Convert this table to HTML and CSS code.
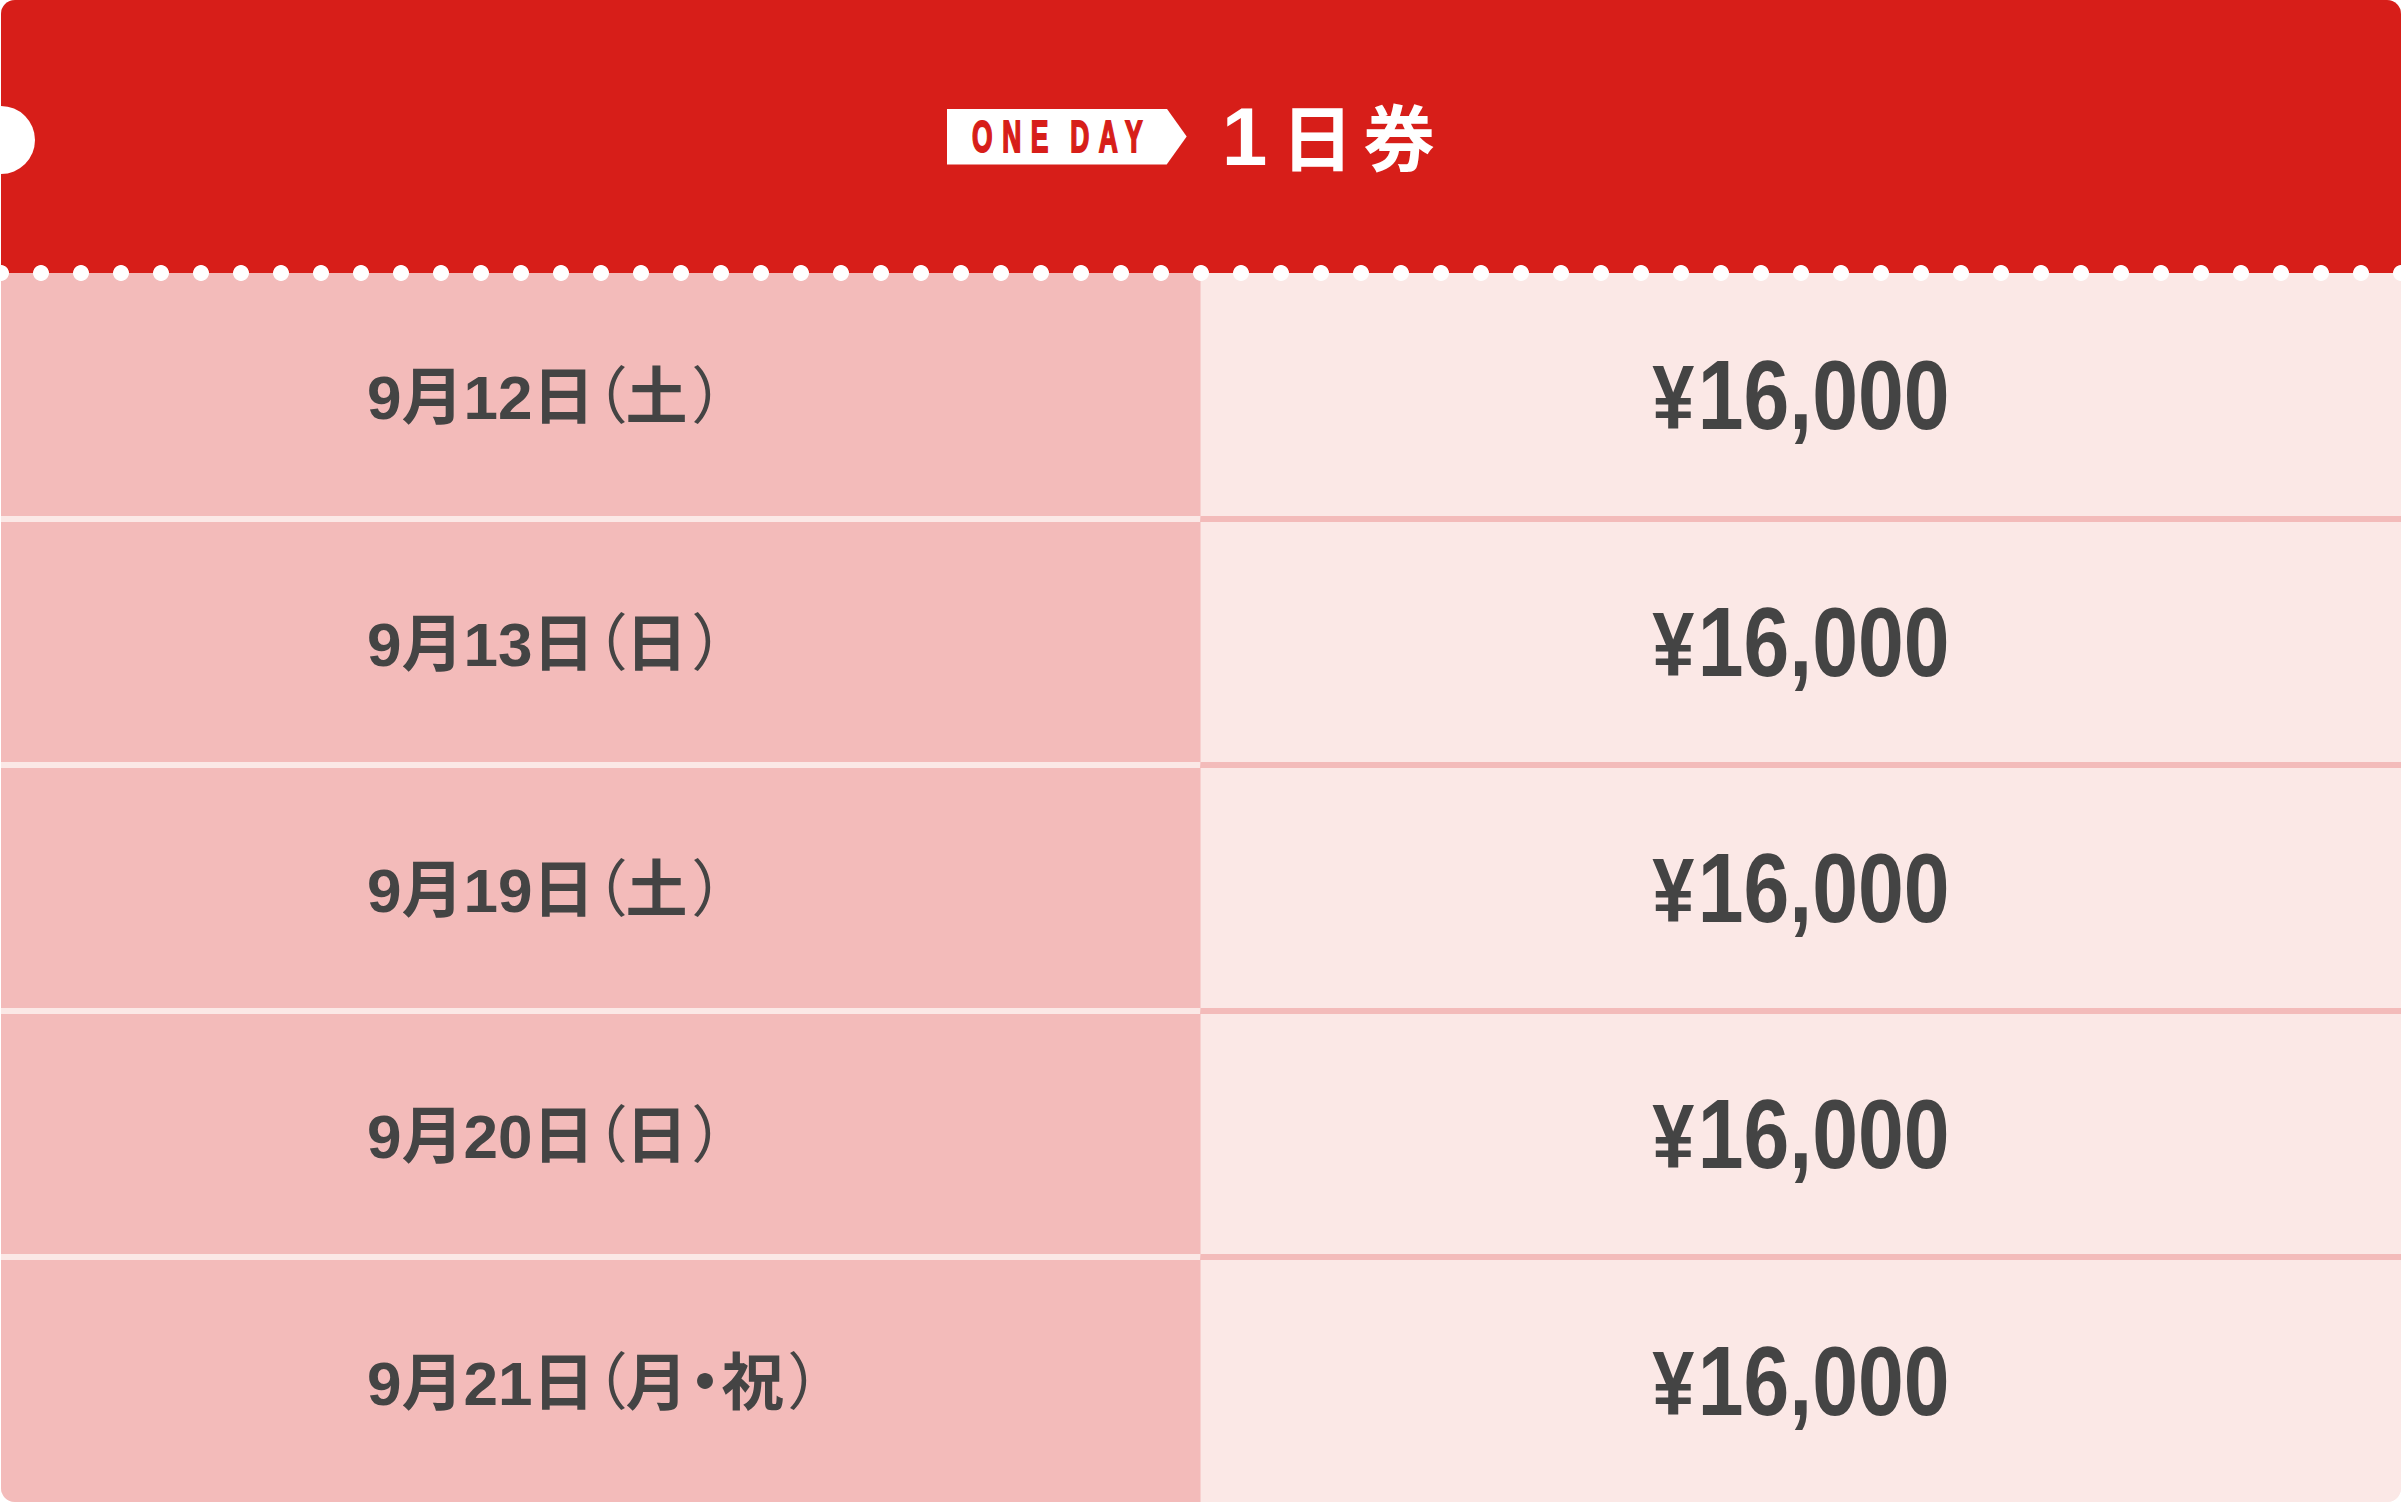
FILE: index.html
```html
<!DOCTYPE html>
<html lang="ja">
<head>
<meta charset="utf-8">
<title>1日券</title>
<link rel="stylesheet" href="styles.css">
</head>
<body>
<div class="ticket">
  <div class="head">
    <div class="tag"><span class="tag-text">ONE DAY</span></div>
    <div class="title"><span class="one">1</span><span class="kanji">日券</span></div>
  </div>
  <div class="rows">
    <div class="row">
      <div class="date"><span class="date-text">9月12日<span class="paren">（</span>土<span class="paren close">）</span></span></div>
      <div class="price"><span class="price-text"><span class="yen">¥</span>16,000</span></div>
    </div>
    <div class="row">
      <div class="date"><span class="date-text">9月13日<span class="paren">（</span>日<span class="paren close">）</span></span></div>
      <div class="price"><span class="price-text"><span class="yen">¥</span>16,000</span></div>
    </div>
    <div class="row">
      <div class="date"><span class="date-text">9月19日<span class="paren">（</span>土<span class="paren close">）</span></span></div>
      <div class="price"><span class="price-text"><span class="yen">¥</span>16,000</span></div>
    </div>
    <div class="row">
      <div class="date"><span class="date-text">9月20日<span class="paren">（</span>日<span class="paren close">）</span></span></div>
      <div class="price"><span class="price-text"><span class="yen">¥</span>16,000</span></div>
    </div>
    <div class="row">
      <div class="date"><span class="date-text">9月21日<span class="paren">（</span>月<span class="mid">・</span>祝<span class="paren close">）</span></span></div>
      <div class="price"><span class="price-text"><span class="yen">¥</span>16,000</span></div>
    </div>
  </div>
</div>
</body>
</html>
```
FILE: styles.css
```css
* {
  box-sizing: border-box;
  margin: 0;
  padding: 0;
}

html,
body {
  background: #ffffff;
}

body {
  width: 2401px;
  height: 1503px;
  overflow: hidden;
  font-family: "Liberation Sans", "Noto Sans CJK JP", sans-serif;
}

.ticket {
  margin-left: 1px;
  width: 2400px;
  height: 1502px;
  border-radius: 14px;
  overflow: hidden;
  display: grid;
  grid-template-rows: 273px 1fr;
  background: #fbe8e6;
}

.head {
  position: relative;
  z-index: 1;
  background: #d71e19;
  display: flex;
  align-items: center;
  justify-content: center;
  padding-right: 10px;
}

/* punched notch on the left edge */
.head::before {
  content: "";
  position: absolute;
  left: -34px;
  top: 106px;
  width: 68px;
  height: 68px;
  border-radius: 50%;
  background: #ffffff;
}

/* perforation dots along the bottom edge */
.head::after {
  content: "";
  position: absolute;
  left: -20px;
  right: -20px;
  bottom: -8px;
  height: 16px;
  background-image: radial-gradient(circle at 20px 8px, #ffffff 7.5px, rgba(255, 255, 255, 0) 8.3px);
  background-size: 40px 16px;
  background-repeat: repeat-x;
}

.tag {
  width: 240px;
  height: 56px;
  flex: none;
  background: #ffffff;
  clip-path: polygon(0 0, 220px 0, 100% 50%, 220px 100%, 0 100%);
  display: flex;
  align-items: center;
  padding-left: 25px;
  margin-right: 35px;
  overflow: hidden;
}

.tag-text {
  display: inline-block;
  color: #d71e19;
  font-family: "Liberation Sans", sans-serif;
  font-weight: 700;
  font-size: 44px;
  line-height: 1;
  letter-spacing: 16px;
  word-spacing: -8px;
  white-space: nowrap;
  -webkit-text-stroke: 2px #d71e19;
  transform: scaleX(0.6);
  transform-origin: left center;
}

.title {
  display: flex;
  align-items: baseline;
  color: #ffffff;
  font-weight: 700;
  line-height: 1;
  white-space: nowrap;
}

.title .one {
  font-family: "Liberation Sans", sans-serif;
  font-size: 82px;
  margin-right: 14px;
}

.title .kanji {
  font-family: "Noto Sans CJK JP", sans-serif;
  font-size: 72px;
  letter-spacing: 10px;
}

.rows {
  display: grid;
  grid-template-rows: 249px 246px 246px 246px 1fr;
}

.row {
  display: grid;
  grid-template-columns: 1199px 1fr;
}

.date {
  background: #f3bbba;
  border-bottom: 6px solid #fbe8e6;
  display: flex;
  align-items: center;
  padding-left: 366px;
  color: #444444;
}

.date-text {
  font-family: "Liberation Sans", "Noto Sans CJK JP", sans-serif;
  font-size: 62px;
  font-weight: 700;
  line-height: 1;
  white-space: nowrap;
}

.paren {
  font-family: "Noto Sans CJK JP", sans-serif;
  font-weight: 400;
  font-feature-settings: "palt";
}

.paren.close {
  margin-left: 6px;
}

.mid {
  font-family: "Noto Sans CJK JP", sans-serif;
  font-feature-settings: "palt";
  margin: 0 1px 0 2px;
}

.price {
  background: #fbe8e6;
  border-bottom: 6px solid #f3bbba;
  border-left: 1px solid #f7d0cf;
  display: flex;
  align-items: center;
  justify-content: center;
}

.row:last-child > .date,
.row:last-child > .price {
  border-bottom: 0;
}

.price-text {
  display: inline-block;
  font-family: "Liberation Sans", sans-serif;
  font-size: 98px;
  font-weight: 700;
  line-height: 1;
  color: #444444;
  white-space: nowrap;
  transform: scaleX(0.84);
}

.yen {
  font-size: 90px;
  margin-right: 4px;
}
```
